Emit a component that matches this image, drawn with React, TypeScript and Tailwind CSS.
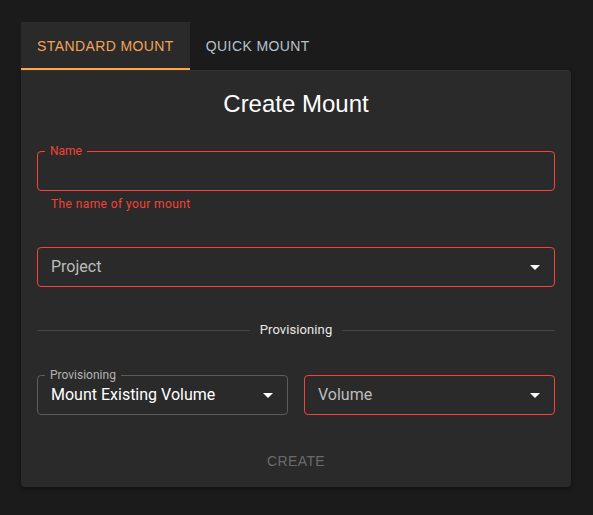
import React from "react";

const Arrow = () => (
  <svg width="24" height="24" viewBox="0 0 24 24" className="absolute right-[7px] top-1/2 -translate-y-1/2" fill="#ffffff">
    <path d="M7 10l5 5 5-5z" />
  </svg>
);

function Field({ label, error, children, className = "" }: { label?: string; error?: boolean; children?: React.ReactNode; className?: string }) {
  return (
    <div
      className={`relative h-10 rounded border flex items-center pl-[13px] ${error ? "border-[#f44336]" : "border-[#5c5c5c]"} ${className}`}
    >
      {label && (
        <span
          className={`absolute left-[7px] top-[-9px] px-[5px] bg-[#2a2a2a] text-[12px] leading-4 ${error ? "text-[#f44336]" : "text-[#b3b3b3]"}`}
        >
          {label}
        </span>
      )}
      {children}
    </div>
  );
}

const arial = "font-['Liberation_Sans',Arial,sans-serif]";

export default function App() {
  return (
    <div
      className="min-h-[515px] w-full bg-[#1b1b1b] pt-[22px] pl-[21px]"
      style={{ fontFamily: "Roboto, 'Liberation Sans', sans-serif" }}
    >
      <div className="w-[550px]">
        <div className={`flex h-12 ${arial}`}>
          <div className="relative flex items-center px-4 bg-[#2a2a2a] text-[14px] tracking-[0.4px] text-[#f3a35a]">
            STANDARD MOUNT
            <div className="absolute left-0 right-0 bottom-0 h-[2px] bg-[#ffa64d]" />
          </div>
          <div className="flex items-center px-4 text-[14px] tracking-[0.4px] text-[#b8c2cc]">
            QUICK MOUNT
          </div>
        </div>
        <div className="bg-[#2a2a2a] rounded-b rounded-tr border-t border-[#333333] shadow-[0_2px_4px_rgba(0,0,0,0.4)] px-4 pt-[17px] pb-2 flex flex-col">
          <h1 className={`text-center text-[24px] leading-8 text-white font-normal ${arial}`}>Create Mount</h1>
          <Field label="Name" error className="mt-[31px]" />
          <div className="mt-[3px] pl-[14px] text-[12px] leading-5 tracking-[0.4px] text-[#f44336]">
            The name of your mount
          </div>
          <Field error className="mt-[33px]">
            <span className="text-[16px] text-[#bdbdbd]">Project</span>
            <Arrow />
          </Field>
          <div className="mt-[33px] h-5 flex items-center gap-[10px]">
            <div className="flex-1 h-px bg-[#454545]" />
            <span className="text-[13px] text-[#e8e8e8] tracking-[0.1px]">Provisioning</span>
            <div className="flex-1 h-px bg-[#454545]" />
          </div>
          <div className="mt-[35px] grid grid-cols-2 gap-4">
            <Field label="Provisioning">
              <span className="text-[16px] text-white">Mount Existing Volume</span>
              <Arrow />
            </Field>
            <Field error>
              <span className="text-[16px] text-[#bdbdbd]">Volume</span>
              <Arrow />
            </Field>
          </div>
          <div className="mt-[28px] h-9 flex items-center justify-center">
            <span className={`text-[14px] tracking-[0.4px] text-[#6a6a6a] ${arial}`}>CREATE</span>
          </div>
        </div>
      </div>
    </div>
  );
}
